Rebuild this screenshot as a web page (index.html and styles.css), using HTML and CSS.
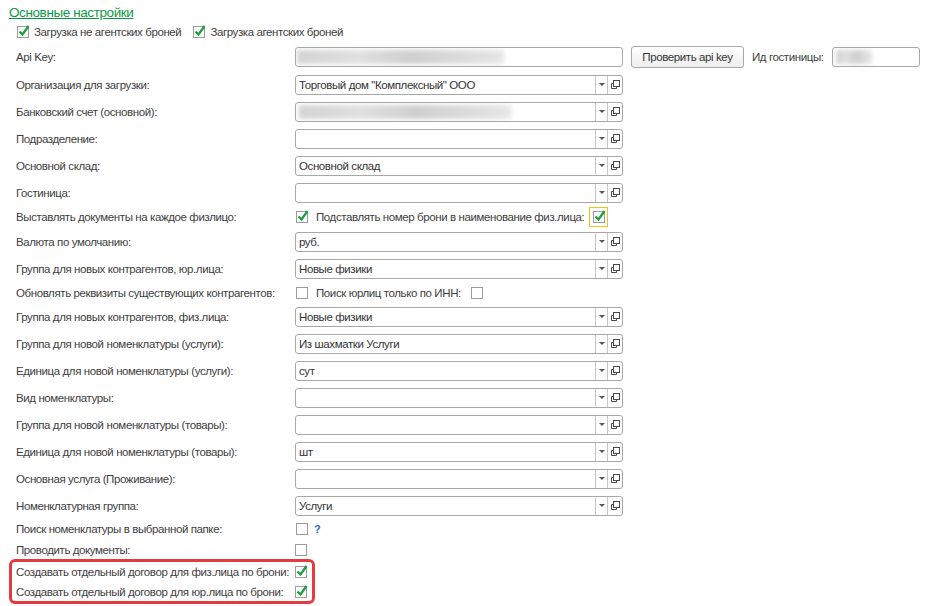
FILE: index.html
```html
<!DOCTYPE html>
<html lang="ru">

<head>
  <meta charset="UTF-8">
  <meta name="viewport" content="width=device-width, initial-scale=1.0">
  <title>Основные настройки</title>
  <link rel="stylesheet" href="styles.css">
</head>

<body>
  <div class="page">
    <a class="title" href="#">Основные настройки</a>

    <div class="top-checks">
      <div class="check-item">
        <span class="cb on"><svg viewBox="0 0 13 13"><path d="M2.5 6.5 L5.5 9.5 L11.5 1"/></svg></span>
        <span>Загрузка не агентских броней</span>
      </div>
      <div class="check-item">
        <span class="cb on"><svg viewBox="0 0 13 13"><path d="M2.5 6.5 L5.5 9.5 L11.5 1"/></svg></span>
        <span>Загрузка агентских броней</span>
      </div>
    </div>

    <div class="row row-api">
      <span class="label">Api Key:</span>
      <div class="field"><span class="val"><span class="blur blur-key"></span></span></div>
      <button class="btn">Проверить api key</button>
      <span class="hotel-label">Ид гостиницы:</span>
      <div class="field field-small"><span class="val"><span class="blur blur-hotel"></span></span></div>
    </div>

    <div class="row">
      <span class="label">Организация для загрузки:</span>
      <div class="field select"><span class="val">Торговый дом "Комплексный" ООО</span><span class="arrow"><i></i></span><span class="open"><svg viewBox="0 0 11 11"><rect x="3.5" y="1.5" width="6" height="6"/><path d="M1.5 4.5 H3 M1.5 4.5 V9.5 H6.5 V7.5"/></svg></span></div>
    </div>

    <div class="row">
      <span class="label">Банковский счет (основной):</span>
      <div class="field select"><span class="val"><span class="blur blur-bank"></span></span><span class="arrow"><i></i></span><span class="open"><svg viewBox="0 0 11 11"><rect x="3.5" y="1.5" width="6" height="6"/><path d="M1.5 4.5 H3 M1.5 4.5 V9.5 H6.5 V7.5"/></svg></span></div>
    </div>

    <div class="row">
      <span class="label">Подразделение:</span>
      <div class="field select"><span class="val"></span><span class="arrow"><i></i></span><span class="open"><svg viewBox="0 0 11 11"><rect x="3.5" y="1.5" width="6" height="6"/><path d="M1.5 4.5 H3 M1.5 4.5 V9.5 H6.5 V7.5"/></svg></span></div>
    </div>

    <div class="row">
      <span class="label">Основной склад:</span>
      <div class="field select"><span class="val">Основной склад</span><span class="arrow"><i></i></span><span class="open"><svg viewBox="0 0 11 11"><rect x="3.5" y="1.5" width="6" height="6"/><path d="M1.5 4.5 H3 M1.5 4.5 V9.5 H6.5 V7.5"/></svg></span></div>
    </div>

    <div class="row">
      <span class="label">Гостиница:</span>
      <div class="field select"><span class="val"></span><span class="arrow"><i></i></span><span class="open"><svg viewBox="0 0 11 11"><rect x="3.5" y="1.5" width="6" height="6"/><path d="M1.5 4.5 H3 M1.5 4.5 V9.5 H6.5 V7.5"/></svg></span></div>
    </div>

    <div class="row h22">
      <span class="label">Выставлять документы на каждое физлицо:</span>
      <span class="cb on shift"><svg viewBox="0 0 13 13"><path d="M2.5 6.5 L5.5 9.5 L11.5 1"/></svg></span>
      <span class="inline-label">Подставлять номер брони в наименование физ.лица:</span>
      <span class="focus-box"><span class="cb on"><svg viewBox="0 0 13 13"><path d="M2.5 6.5 L5.5 9.5 L11.5 1"/></svg></span></span>
    </div>

    <div class="row">
      <span class="label">Валюта по умолчанию:</span>
      <div class="field select"><span class="val">руб.</span><span class="arrow"><i></i></span><span class="open"><svg viewBox="0 0 11 11"><rect x="3.5" y="1.5" width="6" height="6"/><path d="M1.5 4.5 H3 M1.5 4.5 V9.5 H6.5 V7.5"/></svg></span></div>
    </div>

    <div class="row">
      <span class="label">Группа для новых контрагентов, юр.лица:</span>
      <div class="field select"><span class="val">Новые физики</span><span class="arrow"><i></i></span><span class="open"><svg viewBox="0 0 11 11"><rect x="3.5" y="1.5" width="6" height="6"/><path d="M1.5 4.5 H3 M1.5 4.5 V9.5 H6.5 V7.5"/></svg></span></div>
    </div>

    <div class="row h21">
      <span class="label">Обновлять реквизиты существующих контрагентов:</span>
      <span class="cb shift"></span>
      <span class="inline-label">Поиск юрлиц только по ИНН:</span>
      <span class="cb after"></span>
    </div>

    <div class="row">
      <span class="label">Группа для новых контрагентов, физ.лица:</span>
      <div class="field select"><span class="val">Новые физики</span><span class="arrow"><i></i></span><span class="open"><svg viewBox="0 0 11 11"><rect x="3.5" y="1.5" width="6" height="6"/><path d="M1.5 4.5 H3 M1.5 4.5 V9.5 H6.5 V7.5"/></svg></span></div>
    </div>

    <div class="row">
      <span class="label">Группа для новой номенклатуры (услуги):</span>
      <div class="field select"><span class="val">Из шахматки Услуги</span><span class="arrow"><i></i></span><span class="open"><svg viewBox="0 0 11 11"><rect x="3.5" y="1.5" width="6" height="6"/><path d="M1.5 4.5 H3 M1.5 4.5 V9.5 H6.5 V7.5"/></svg></span></div>
    </div>

    <div class="row">
      <span class="label">Единица для новой номенклатуры (услуги):</span>
      <div class="field select"><span class="val">сут</span><span class="arrow"><i></i></span><span class="open"><svg viewBox="0 0 11 11"><rect x="3.5" y="1.5" width="6" height="6"/><path d="M1.5 4.5 H3 M1.5 4.5 V9.5 H6.5 V7.5"/></svg></span></div>
    </div>

    <div class="row">
      <span class="label">Вид номенклатуры:</span>
      <div class="field select"><span class="val"></span><span class="arrow"><i></i></span><span class="open"><svg viewBox="0 0 11 11"><rect x="3.5" y="1.5" width="6" height="6"/><path d="M1.5 4.5 H3 M1.5 4.5 V9.5 H6.5 V7.5"/></svg></span></div>
    </div>

    <div class="row">
      <span class="label">Группа для новой номенклатуры (товары):</span>
      <div class="field select"><span class="val"></span><span class="arrow"><i></i></span><span class="open"><svg viewBox="0 0 11 11"><rect x="3.5" y="1.5" width="6" height="6"/><path d="M1.5 4.5 H3 M1.5 4.5 V9.5 H6.5 V7.5"/></svg></span></div>
    </div>

    <div class="row">
      <span class="label">Единица для новой номенклатуры (товары):</span>
      <div class="field select"><span class="val">шт</span><span class="arrow"><i></i></span><span class="open"><svg viewBox="0 0 11 11"><rect x="3.5" y="1.5" width="6" height="6"/><path d="M1.5 4.5 H3 M1.5 4.5 V9.5 H6.5 V7.5"/></svg></span></div>
    </div>

    <div class="row">
      <span class="label">Основная услуга (Проживание):</span>
      <div class="field select"><span class="val"></span><span class="arrow"><i></i></span><span class="open"><svg viewBox="0 0 11 11"><rect x="3.5" y="1.5" width="6" height="6"/><path d="M1.5 4.5 H3 M1.5 4.5 V9.5 H6.5 V7.5"/></svg></span></div>
    </div>

    <div class="row">
      <span class="label">Номенклатурная группа:</span>
      <div class="field select"><span class="val">Услуги</span><span class="arrow"><i></i></span><span class="open"><svg viewBox="0 0 11 11"><rect x="3.5" y="1.5" width="6" height="6"/><path d="M1.5 4.5 H3 M1.5 4.5 V9.5 H6.5 V7.5"/></svg></span></div>
    </div>

    <div class="row h20">
      <span class="label">Поиск номенклатуры в выбранной папке:</span>
      <span class="cb shift"></span>
      <span class="help">?</span>
    </div>

    <div class="row h21">
      <span class="label">Проводить документы:</span>
      <span class="cb"></span>
    </div>

    <div class="highlight">
      <div class="row h20">
        <span class="label">Создавать отдельный договор для физ.лица по брони:</span>
        <span class="cb on"><svg viewBox="0 0 13 13"><path d="M2.5 6.5 L5.5 9.5 L11.5 1"/></svg></span>
      </div>
      <div class="row h19">
        <span class="label">Создавать отдельный договор для юр.лица по брони:</span>
        <span class="cb on"><svg viewBox="0 0 13 13"><path d="M2.5 6.5 L5.5 9.5 L11.5 1"/></svg></span>
      </div>
    </div>
  </div>
</body>

</html>
```

FILE: styles.css
```css
html,
body {
  margin: 0;
  background-color: #fff;
}

body {
  font-family: Arial, "Liberation Sans", sans-serif;
  font-size: 11.5px;
  letter-spacing: -0.4px;
  color: #404040;
}

.page {
  padding: 4px 0 0 9px;
}

.title {
  display: block;
  width: fit-content;
  height: 18px;
  line-height: 18px;
  font-size: 13.5px;
  color: #0d9a44;
  text-decoration: underline;
}

.top-checks {
  display: flex;
  align-items: center;
  gap: 12px;
  height: 20px;
  margin-left: 8px;
}

.check-item {
  display: flex;
  align-items: center;
  gap: 5px;
}

.row {
  display: flex;
  align-items: center;
  height: 27px;
  margin-left: 7px;
  white-space: nowrap;
}

.row-api {
  height: 29px;
}

.h22 {
  height: 22px;
}

.h21 {
  height: 21px;
}

.h20 {
  height: 20px;
}

.h19 {
  height: 19px;
}

.label {
  flex: none;
  width: 279px;
}

.field {
  display: flex;
  flex: none;
  box-sizing: border-box;
  width: 328px;
  height: 20px;
  border: 1px solid #a8a8a8;
  border-radius: 3px;
  background-color: #fff;
  color: #333;
  overflow: hidden;
}

.field .val {
  flex: 1;
  display: flex;
  align-items: center;
  padding-left: 3px;
  overflow: hidden;
}

.field .arrow {
  flex: none;
  width: 11px;
  display: flex;
  justify-content: center;
  align-items: center;
  border-left: 1px solid #c6c6c6;
}

.field .arrow i {
  width: 0;
  height: 0;
  border-left: 3px solid transparent;
  border-right: 3px solid transparent;
  border-top: 3px solid #555;
}

.field .open {
  flex: none;
  width: 14px;
  display: flex;
  justify-content: center;
  align-items: center;
  border-left: 1px solid #c6c6c6;
}

.field .open svg {
  width: 11px;
  height: 11px;
  fill: none;
  stroke: #4a4a4a;
  stroke-width: 1;
}

.field-small {
  width: 88px;
}

.blur {
  display: block;
  height: 14px;
  background: linear-gradient(90deg, #d4d4d4, #e0e0e0 30%, #cfcfcf 55%, #dcdcdc 80%, #e6e6e6);
  filter: blur(2px);
}

.blur-key {
  width: 207px;
  margin-left: -2px;
}

.blur-bank {
  width: 212px;
}

.blur-hotel {
  width: 36px;
}

.btn {
  flex: none;
  box-sizing: border-box;
  height: 22px;
  width: 113px;
  margin-left: 8px;
  padding: 0;
  font-family: inherit;
  font-size: 11.5px;
  letter-spacing: -0.4px;
  color: #333;
  background: linear-gradient(#fff, #ededed);
  border: 1px solid #a8a8a8;
  border-radius: 3px;
}

.hotel-label {
  margin: 0 8px 0 8px;
}

.cb {
  position: relative;
  flex: none;
  box-sizing: border-box;
  width: 12px;
  height: 12px;
  border: 1px solid #9c9c9c;
  background-color: #fff;
}

.cb svg {
  position: absolute;
  left: -1px;
  top: -2px;
  width: 13px;
  height: 13px;
  overflow: visible;
  fill: none;
  stroke: #1a9f3e;
  stroke-width: 2.2;
}

.cb.shift {
  margin-left: 1px;
}

.inline-label {
  margin-left: 8px;
}

.cb.after {
  margin-left: 10px;
}

.focus-box {
  display: flex;
  justify-content: center;
  align-items: center;
  box-sizing: border-box;
  width: 19px;
  height: 20px;
  margin-left: 5px;
  border: 1px solid #f2c21b;
}

.help {
  margin-left: 6px;
  color: #1f72c4;
  font-size: 11px;
  font-weight: bold;
}

.highlight {
  width: fit-content;
  margin-top: -1px;
  padding: 0 5px 0 4px;
  border: 3px solid #e53a3f;
  border-radius: 6px;
}

.highlight .row {
  margin-left: 0;
}
```
